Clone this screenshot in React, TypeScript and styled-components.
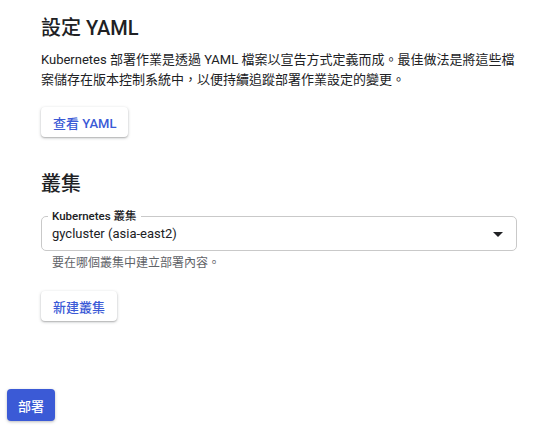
import styled, { createGlobalStyle } from "styled-components"

const Blue = "#3b5ad6"
const TextDark = "#202124"
const TextMuted = "#5f6368"

const GlobalStyle = createGlobalStyle`
    body {
        margin: 0;
        background: #fff;
        font-family: Roboto, "Noto Sans CJK TC", "Noto Sans", sans-serif;
        color: ${TextDark};
    }
`

const Page = styled.div`
    width: 544px;
    height: 439px;
    display: flex;
    flex-direction: column;
`

const Content = styled.main`
    padding: 14px 27px 0 41px;
    display: flex;
    flex-direction: column;
    align-items: flex-start;
`

const Heading = styled.h2<{ $top?: number }>`
    margin: ${({ $top }) => $top || 0}px 0 0;
    font-size: 20px;
    line-height: 28px;
    font-weight: 500;
`

const Description = styled.p`
    margin: 8px 0 0;
    font-size: 13px;
    line-height: 20px;
`

const OutlineButton = styled.button<{ $top: number }>`
    margin-top: ${({ $top }) => $top}px;
    height: 30px;
    padding: 0 12px;
    border: none;
    border-radius: 4px;
    background: #fff;
    color: ${Blue};
    font-family: inherit;
    font-size: 13px;
    font-weight: 500;
    box-shadow: 0 1px 3px rgba(60, 64, 67, 0.35), 0 1px 1px rgba(60, 64, 67, 0.15);
    cursor: pointer;
`

const Field = styled.fieldset`
    margin: 11px 0 0;
    align-self: stretch;
    padding: 0 6px 0 10px;
    border: 1px solid #c9c9c9;
    border-radius: 5px;
    height: 42px;
    box-sizing: border-box;
    display: flex;
    align-items: center;
    justify-content: space-between;
`

const FieldLabel = styled.legend`
    margin-left: -4px;
    padding: 0 4px;
    font-size: 11.5px;
    line-height: 14px;
    font-weight: 500;
    color: ${TextDark};
`

const FieldValue = styled.span`
    font-size: 13px;
    line-height: 20px;
    margin-top: -1px;
`

const Arrow = styled.svg`
    margin-top: -1px;
    flex: none;
`

const Helper = styled.div`
    margin: 4px 0 0 11px;
    font-size: 12px;
    line-height: 16px;
    color: ${TextMuted};
`

const Footer = styled.footer`
    margin-top: auto;
    padding: 0 0 18px 7px;
`

const PrimaryButton = styled.button`
    height: 32px;
    padding: 0 11px;
    border: none;
    border-radius: 4px;
    background: ${Blue};
    color: #fff;
    font-family: inherit;
    font-size: 13px;
    font-weight: 500;
    box-shadow: 0 1px 3px rgba(60, 64, 67, 0.35);
    cursor: pointer;
`

export default function App() {
    return (
        <Page>
            <GlobalStyle />
            <Content>
                <Heading>設定 YAML</Heading>
                <Description>
                    Kubernetes 部署作業是透過 YAML 檔案以宣告方式定義而成。最佳做法是將這些檔案儲存在版本控制系統中，以便持續追蹤部署作業設定的變更。
                </Description>
                <OutlineButton $top={17}>查看 YAML</OutlineButton>

                <Heading $top={33}>叢集</Heading>
                <Field>
                    <FieldLabel>Kubernetes 叢集</FieldLabel>
                    <FieldValue>gycluster (asia-east2)</FieldValue>
                    <Arrow width="24" height="24" viewBox="0 0 24 24">
                        <path d="M7 10l5 5 5-5z" fill="#202124" />
                    </Arrow>
                </Field>
                <Helper>要在哪個叢集中建立部署內容。</Helper>
                <OutlineButton $top={20}>新建叢集</OutlineButton>
            </Content>
            <Footer>
                <PrimaryButton>部署</PrimaryButton>
            </Footer>
        </Page>
    )
}
